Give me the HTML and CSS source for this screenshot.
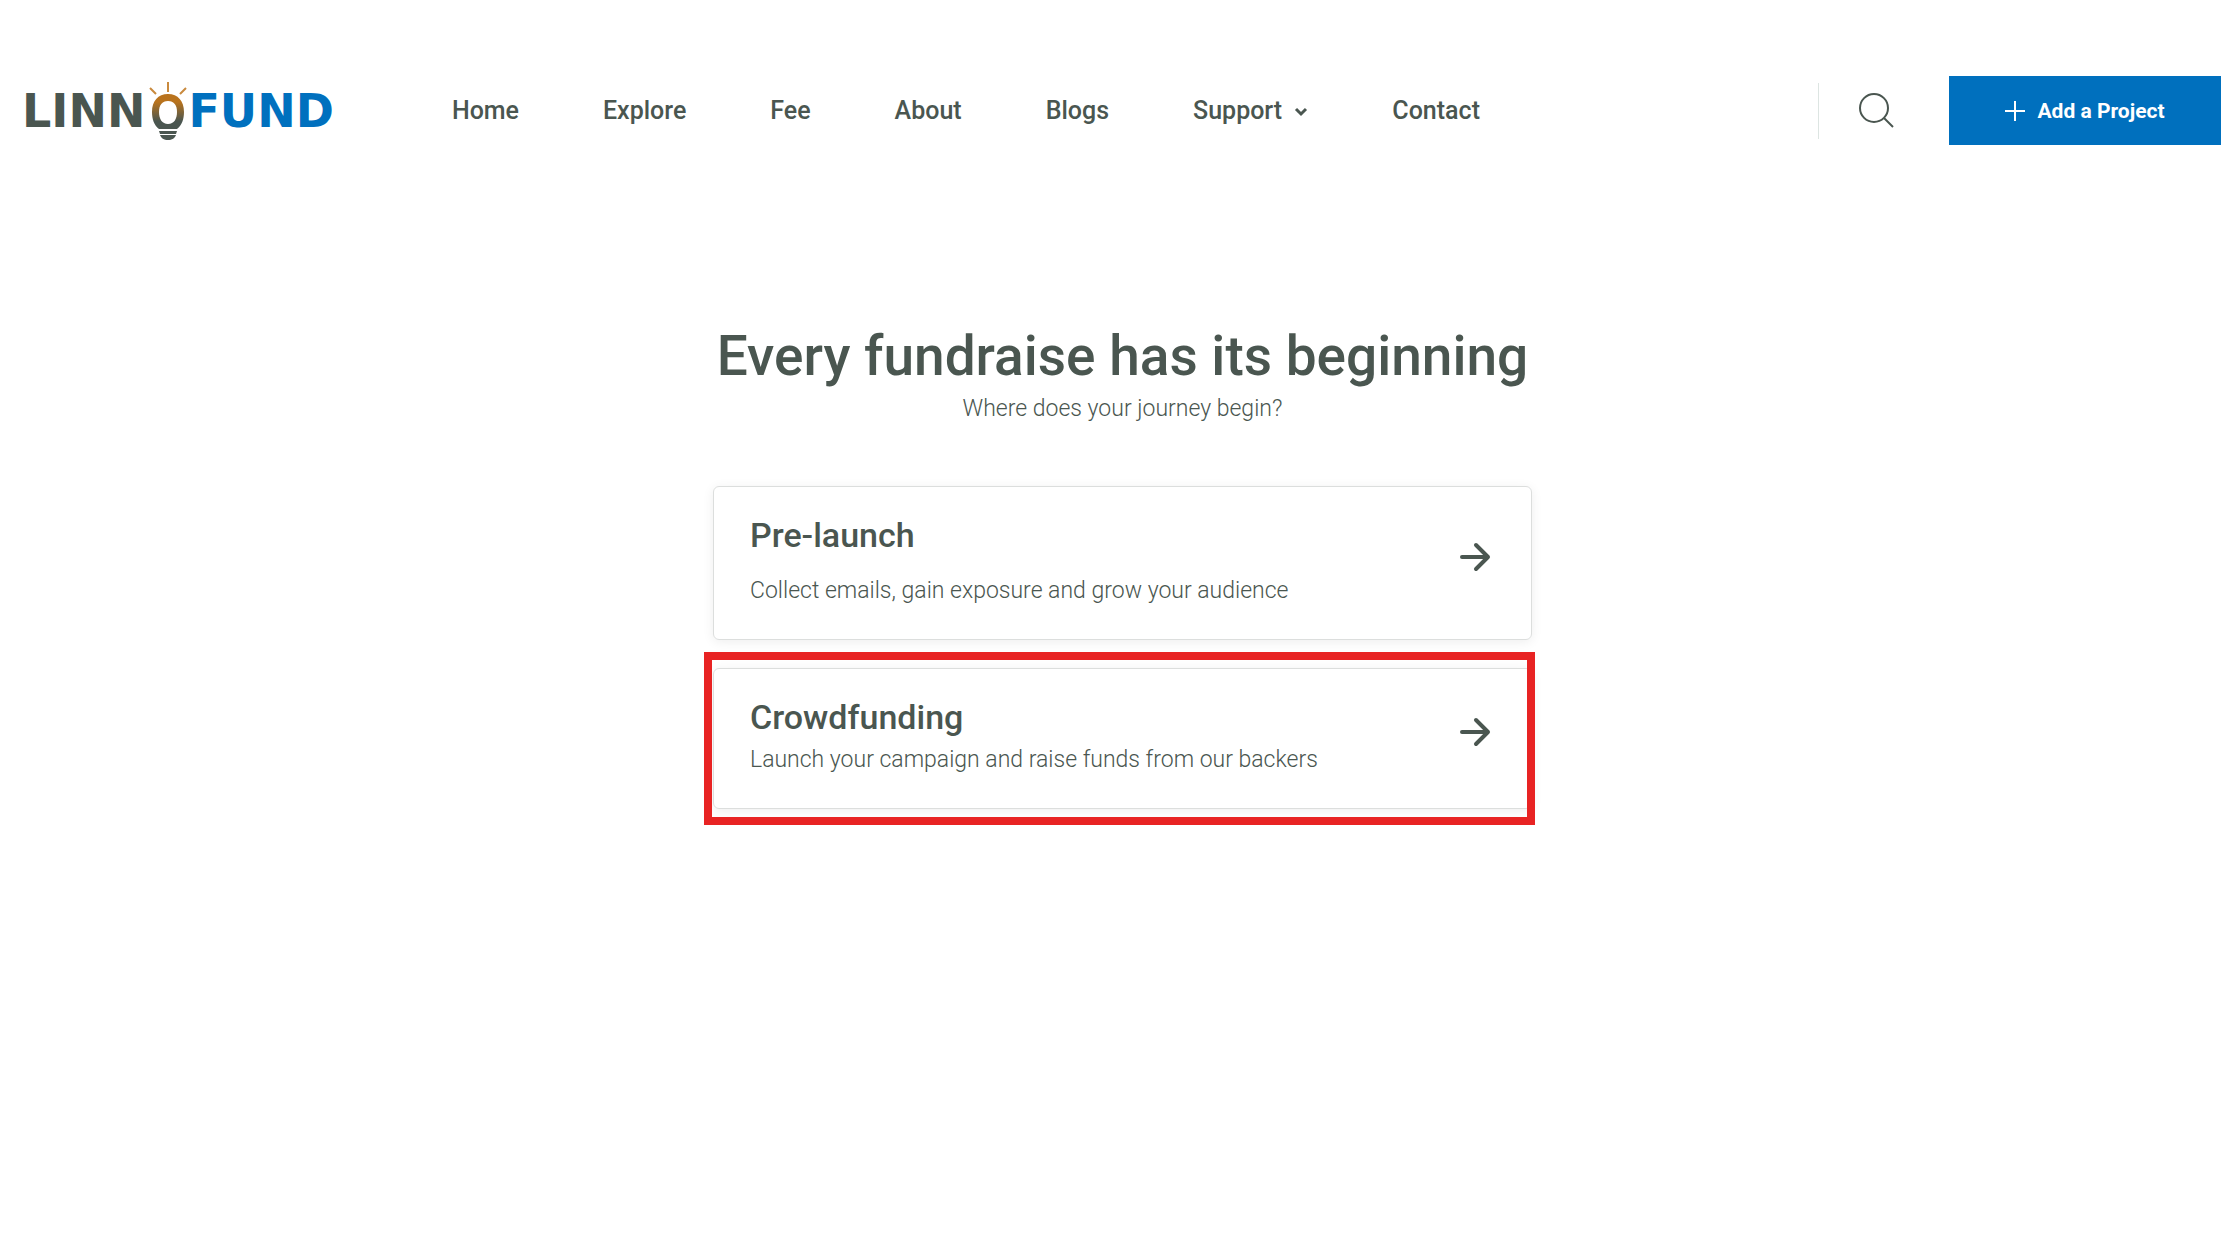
FILE: index.html
```html
<!DOCTYPE html>
<html lang="en">
<head>
    <meta charset="UTF-8">
    <meta name="viewport" content="width=device-width, initial-scale=1.0">
    <title>LinnoFund</title>
    <link rel="stylesheet" href="styles.css">
</head>
<body>
    <!-- Header -->
    <header class="header">
        <a href="#" class="logo" aria-label="LinnoFund">
            <span class="logo-dark">LINN</span>
            <svg class="logo-bulb" width="38" height="60" viewBox="0 0 38 60" fill="none">
                <defs>
                    <linearGradient id="bulb" x1="0" y1="14" x2="0" y2="49" gradientUnits="userSpaceOnUse">
                        <stop offset="0.2" stop-color="#b9731d"/>
                        <stop offset="0.75" stop-color="#4a5650"/>
                    </linearGradient>
                </defs>
                <path d="M19 1v10M1 7l6 6M37 7l-6 6" stroke="#c98a3e" stroke-width="2"/>
                <path fill-rule="evenodd" fill="url(#bulb)" d="M19 13C9 13 3 20 3 31c0 7 2 13 7 17h18c5-4 7-10 7-17 0-11-6-18-16-18zm0 7c6 0 9 4 9 11s-3 12-9 12-9-5-9-12 3-11 9-11z"/>
                <path fill="#4a5650" d="M10 50h18l-1 3H11zM11 54h16c-1 3-4 5-8 5s-7-2-8-5z"/>
            </svg>
            <span class="logo-blue">FUND</span>
        </a>
        <nav class="nav">
            <a href="#">Home</a>
            <a href="#">Explore</a>
            <a href="#">Fee</a>
            <a href="#">About</a>
            <a href="#">Blogs</a>
            <a href="#">Support
                <svg width="14" height="10" viewBox="0 0 14 10" fill="none" stroke="currentColor" stroke-width="3"><path d="M2 2l5 5 5-5"/></svg>
            </a>
            <a href="#">Contact</a>
        </nav>
        <div class="actions">
            <button class="search" type="button" aria-label="Search">
                <svg width="36" height="36" viewBox="0 0 36 36" fill="none" stroke="currentColor" stroke-width="2"><circle cx="15" cy="15" r="14"/><path d="M25 25l9 9"/></svg>
            </button>
            <button class="add-btn" type="button">
                <svg width="20" height="20" viewBox="0 0 20 20" stroke="currentColor" stroke-width="2"><path d="M10 0v20M0 10h20"/></svg>
                Add a Project
            </button>
        </div>
    </header>

    <!-- Project type -->
    <main class="start">
        <div class="start-inner">
            <h1>Every fundraise has its beginning</h1>
            <p class="subtitle">Where does your journey begin?</p>

            <a href="#" class="card">
                <div class="card-text card-text-wide">
                    <h2>Pre-launch</h2>
                    <p>Collect emails, gain exposure and grow your audience</p>
                </div>
                <svg class="arrow" width="32" height="30" viewBox="0 0 32 30"><path d="M3 15h26M17 3l12 12-12 12"/></svg>
            </a>

            <a href="#" class="card card-selected">
                <div class="card-text">
                    <h2>Crowdfunding</h2>
                    <p>Launch your campaign and raise funds from our backers</p>
                </div>
                <svg class="arrow" width="32" height="30" viewBox="0 0 32 30"><path d="M3 15h26M17 3l12 12-12 12"/></svg>
            </a>
        </div>
    </main>
</body>
</html>
```
FILE: styles.css
```css
* {
    box-sizing: border-box;
}

body {
    margin: 0;
    background: #fff;
    color: #4a5650;
    font-family: Roboto, sans-serif;
}

a {
    color: inherit;
    text-decoration: none;
}

h1, h2, p {
    margin: 0;
}

/* Header */
.header {
    display: flex;
    align-items: center;
    padding: 76px 19px 0 22px;
}

.logo {
    display: flex;
    align-items: center;
    font-family: "DejaVu Sans", sans-serif;
    font-size: 46px;
    font-weight: 700;
    line-height: 60px;
}

.logo-bulb {
    margin: 0 1px 0 4px;
}

.logo-blue {
    color: #0070be;
}

.nav {
    display: flex;
    gap: 84px;
    margin-left: 118px;
    font-size: 25px;
    font-weight: 500;
    line-height: 32px;
}

.nav svg {
    margin-left: 6px;
    vertical-align: middle;
}

.actions {
    display: flex;
    align-items: center;
    margin-left: auto;
}

.search {
    display: flex;
    align-items: center;
    height: 56px;
    padding: 0 54px 0 40px;
    border: 0;
    border-left: 1px solid #dde5e2;
    background: none;
    color: #4a5650;
}

.add-btn {
    display: flex;
    align-items: center;
    justify-content: center;
    gap: 12px;
    width: 272px;
    height: 69px;
    border: 0;
    background: #0070be;
    color: #fff;
    font-family: Roboto, sans-serif;
    font-size: 21px;
    font-weight: 700;
}

/* Project type */
.start {
    padding: 176px 19px 0 24px;
}

.start-inner {
    max-width: 819px;
    margin: 0 auto;
}

h1 {
    font-size: 55px;
    font-weight: 500;
    line-height: 70px;
    text-align: center;
}

.subtitle {
    margin-bottom: 61px;
    padding-top: 2px;
    font-size: 23px;
    font-weight: 300;
    line-height: 32px;
    text-align: center;
}

.card {
    position: relative;
    display: flex;
    align-items: center;
    justify-content: space-between;
    margin-bottom: 28px;
    padding: 28px 40px 33px 36px;
    border: 1px solid #dcdedd;
    border-radius: 6px;
    box-shadow: 0 2px 12px rgba(0, 0, 0, 0.07);
}

.card-text {
    display: flex;
    flex-direction: column;
    gap: 8px;
}

.card-text-wide {
    gap: 21px;
}

.card h2 {
    font-size: 34px;
    font-weight: 500;
    line-height: 40px;
}

.card p {
    font-size: 23px;
    font-weight: 300;
    line-height: 30px;
}

.arrow {
    margin-bottom: 8px;
    fill: none;
    stroke: #4a5650;
    stroke-width: 4;
    stroke-linecap: round;
    stroke-linejoin: round;
}

/* Red frame round the selected card */
.card-selected::after {
    content: "";
    position: absolute;
    inset: -17px -4px -17px -10px;
    border: 8px solid #e82323;
}
```
